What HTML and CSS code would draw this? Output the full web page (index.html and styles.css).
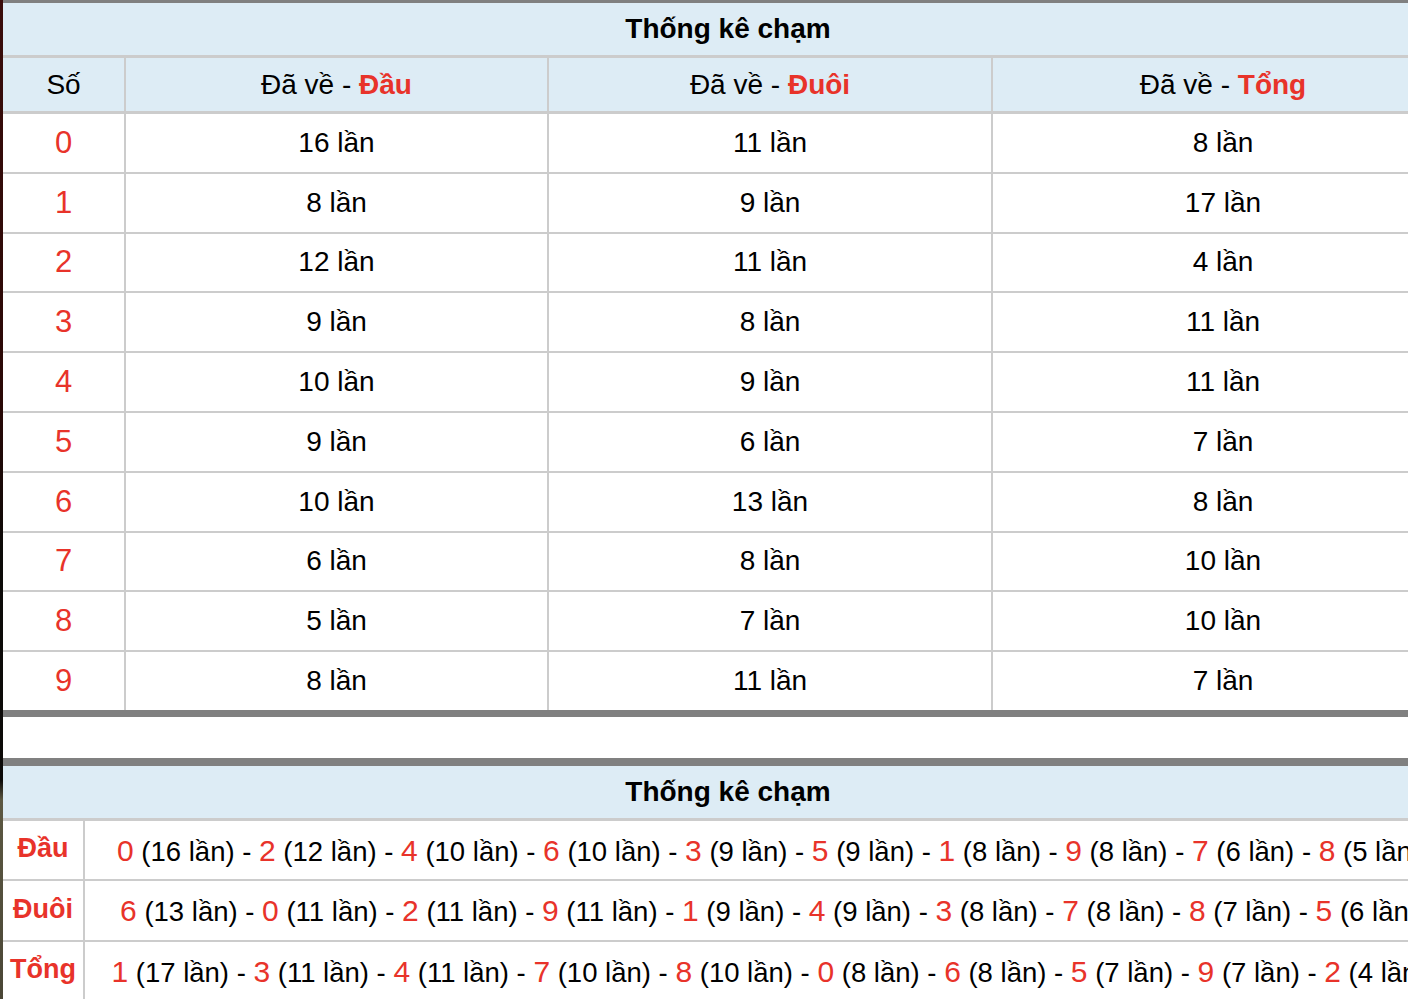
FILE: index.html
```html
<!DOCTYPE html>
<html lang="vi">
<head>
<meta charset="utf-8">
<title>Thống kê chạm</title>
<link rel="stylesheet" href="styles.css">
</head>
<body>
<div class="page">
  <div class="edge"></div>
  <div class="content">
    <table class="stat stat-main">
      <colgroup>
        <col class="c-so"><col class="c-dau"><col class="c-duoi"><col class="c-tong">
      </colgroup>
      <thead>
        <tr><th class="title" colspan="4">Thống kê chạm</th></tr>
        <tr class="head">
          <th>Số</th>
          <th>Đã về - <b class="red">Đầu</b></th>
          <th>Đã về - <b class="red">Đuôi</b></th>
          <th>Đã về - <b class="red">Tổng</b></th>
        </tr>
      </thead>
      <tbody>
        <tr><td class="num">0</td><td>16 lần</td><td>11 lần</td><td>8 lần</td></tr>
        <tr><td class="num">1</td><td>8 lần</td><td>9 lần</td><td>17 lần</td></tr>
        <tr><td class="num">2</td><td>12 lần</td><td>11 lần</td><td>4 lần</td></tr>
        <tr><td class="num">3</td><td>9 lần</td><td>8 lần</td><td>11 lần</td></tr>
        <tr><td class="num">4</td><td>10 lần</td><td>9 lần</td><td>11 lần</td></tr>
        <tr><td class="num">5</td><td>9 lần</td><td>6 lần</td><td>7 lần</td></tr>
        <tr><td class="num">6</td><td>10 lần</td><td>13 lần</td><td>8 lần</td></tr>
        <tr><td class="num">7</td><td>6 lần</td><td>8 lần</td><td>10 lần</td></tr>
        <tr><td class="num">8</td><td>5 lần</td><td>7 lần</td><td>10 lần</td></tr>
        <tr><td class="num">9</td><td>8 lần</td><td>11 lần</td><td>7 lần</td></tr>
      </tbody>
    </table>

    <table class="stat stat-sum">
      <colgroup>
        <col class="c-label"><col class="c-list">
      </colgroup>
      <thead>
        <tr><th class="title" colspan="2">Thống kê chạm</th></tr>
      </thead>
      <tbody>
        <tr>
          <th class="label">Đầu</th>
          <td class="list"><span class="d">0</span> (16 lần) - <span class="d">2</span> (12 lần) - <span class="d">4</span> (10 lần) - <span class="d">6</span> (10 lần) - <span class="d">3</span> (9 lần) - <span class="d">5</span> (9 lần) - <span class="d">1</span> (8 lần) - <span class="d">9</span> (8 lần) - <span class="d">7</span> (6 lần) - <span class="d">8</span> (5 lần)</td>
        </tr>
        <tr>
          <th class="label">Đuôi</th>
          <td class="list"><span class="d">6</span> (13 lần) - <span class="d">0</span> (11 lần) - <span class="d">2</span> (11 lần) - <span class="d">9</span> (11 lần) - <span class="d">1</span> (9 lần) - <span class="d">4</span> (9 lần) - <span class="d">3</span> (8 lần) - <span class="d">7</span> (8 lần) - <span class="d">8</span> (7 lần) - <span class="d">5</span> (6 lần)</td>
        </tr>
        <tr>
          <th class="label">Tổng</th>
          <td class="list"><span class="d">1</span> (17 lần) - <span class="d">3</span> (11 lần) - <span class="d">4</span> (11 lần) - <span class="d">7</span> (10 lần) - <span class="d">8</span> (10 lần) - <span class="d">0</span> (8 lần) - <span class="d">6</span> (8 lần) - <span class="d">5</span> (7 lần) - <span class="d">9</span> (7 lần) - <span class="d">2</span> (4 lần)</td>
        </tr>
      </tbody>
    </table>
  </div>
</div>
</body>
</html>
```

FILE: styles.css
```css
html, body {
  margin: 0;
  padding: 0;
  background: #ffffff;
  overflow: hidden;
}

body {
  font-family: "Liberation Sans", Arial, Helvetica, sans-serif;
  color: #000;
}

.page {
  display: flex;
  width: 1453px;
  min-height: 999px;
}

.edge {
  flex: 0 0 3px;
  background: linear-gradient(to bottom, #3a0d0b 0%, #2a0806 40%, #0c0a08 55%, #0c0a08 78%, #5c5842 80%, #4a4636 100%);
}

.content {
  flex: 1 1 auto;
  display: flex;
  flex-direction: column;
  gap: 41px;
}

.stat {
  width: 1450px;
  border-collapse: collapse;
  table-layout: fixed;
}

.stat-main {
  border-top: 3px solid #808080;
  border-bottom: 7px solid #808080;
}

.stat-sum {
  border-top: 8px solid #808080;
}

.c-so { width: 122px; }
.c-dau { width: 423px; }
.c-duoi { width: 444px; }
.c-tong { width: 461px; }

.c-label { width: 81px; }
.c-list { width: 1369px; }

.title {
  height: 52px;
  padding: 0;
  background: #ddecf5;
  font-size: 28px;
  font-weight: bold;
  text-align: center;
  vertical-align: middle;
  border-bottom: 3px solid #cccccc;
}

.head th {
  height: 53px;
  padding: 0;
  background: #ddecf5;
  font-size: 28px;
  font-weight: normal;
  text-align: center;
  vertical-align: middle;
  border-bottom: 3px solid #cccccc;
  border-left: 2px solid #cccccc;
}

.head th:first-child,
.stat-main td:first-child {
  border-left: none;
}

.red {
  color: #e8332a;
  font-weight: bold;
}

.stat-main td {
  height: 57.8px;
  padding: 0;
  font-size: 28px;
  line-height: 32px;
  text-align: center;
  vertical-align: middle;
  border-left: 2px solid #cccccc;
  border-top: 2px solid #cccccc;
}

.stat-main tbody tr:first-child td {
  border-top: none;
}

.stat-main td.num {
  color: #e8332a;
  font-size: 31px;
}

.stat-sum td,
.stat-sum .label {
  height: 58.5px;
  padding: 0;
  line-height: 32px;
  vertical-align: middle;
  border-top: 2px solid #cccccc;
}

.stat-sum tbody tr:first-child td,
.stat-sum tbody tr:first-child .label {
  border-top: none;
}

.stat-sum .label {
  height: 54.5px;
  padding-bottom: 4px;
  color: #e8332a;
  font-size: 27px;
  font-weight: bold;
  text-align: center;
}

.stat-sum td.list {
  height: 56.5px;
  padding-top: 2px;
  font-size: 27.5px;
  text-align: center;
  white-space: nowrap;
  border-left: 2px solid #cccccc;
}

.d {
  color: #e8332a;
  font-size: 30px;
}
```
